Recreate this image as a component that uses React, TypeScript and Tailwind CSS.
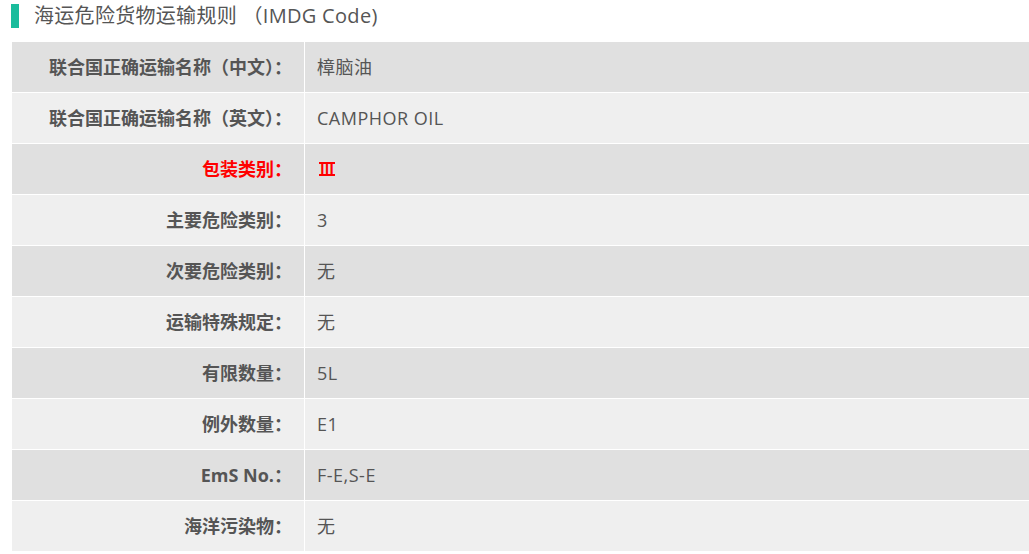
const ROWS: { label: string; value: string; red?: boolean }[] = [
  { label: "联合国正确运输名称（中文）：", value: "樟脑油" },
  { label: "联合国正确运输名称（英文）：", value: "CAMPHOR OIL" },
  { label: "包装类别：", value: "Ⅲ", red: true },
  { label: "主要危险类别：", value: "3" },
  { label: "次要危险类别：", value: "无" },
  { label: "运输特殊规定：", value: "无" },
  { label: "有限数量：", value: "5L" },
  { label: "例外数量：", value: "E1" },
  { label: "EmS No.：", value: "F-E,S-E" },
  { label: "海洋污染物：", value: "无" },
];

export default function App() {
  return (
    <div
      className="h-[554px] w-[1029px] overflow-hidden bg-white text-[#555]"
      style={{ fontFamily: '"Open Sans", "Noto Sans CJK SC", sans-serif' }}
    >
      {/* Section title */}
      <div className="flex h-[30px] items-center pl-[11px] pt-[2px]">
        <span className="h-[24px] w-[8px] bg-[#1abc9c]" />
        <h2 className="ml-[15px] text-[20px] leading-none tracking-[0.3px] text-[#555]">
          海运危险货物运输规则 （IMDG Code)
        </h2>
      </div>

      {/* Table */}
      <div className="ml-[12px] mt-[12px] flex w-[1030px] flex-col gap-px">
        {ROWS.map((row, i) => (
          <div
            key={row.label}
            className={`flex h-[50px] ${i % 2 === 0 ? "bg-[#e0e0e0]" : "bg-[#efefef]"}`}
          >
            <div
              className={`flex w-[292px] shrink-0 items-center justify-end pr-[12px] text-[18px] font-bold ${
                row.red ? "text-[#ff0000]" : "text-[#555]"
              }`}
            >
              {row.label}
            </div>
            <div className="w-px bg-white" />
            {row.red ? (
              <div className="flex flex-1 items-center pl-[14px] text-[#ff0000]">
                {/* roman numeral with top/bottom bars like the reference glyph */}
                <span className="inline-block border-y-2 border-[#ff0000] px-[1px] text-[14px] font-bold leading-[10px]">
                  {row.value}
                </span>
              </div>
            ) : (
              <div className="flex flex-1 items-center pl-[12px] text-[18px] tracking-[0.5px] text-[#555]">
                {row.value}
              </div>
            )}
          </div>
        ))}
      </div>
    </div>
  );
}
